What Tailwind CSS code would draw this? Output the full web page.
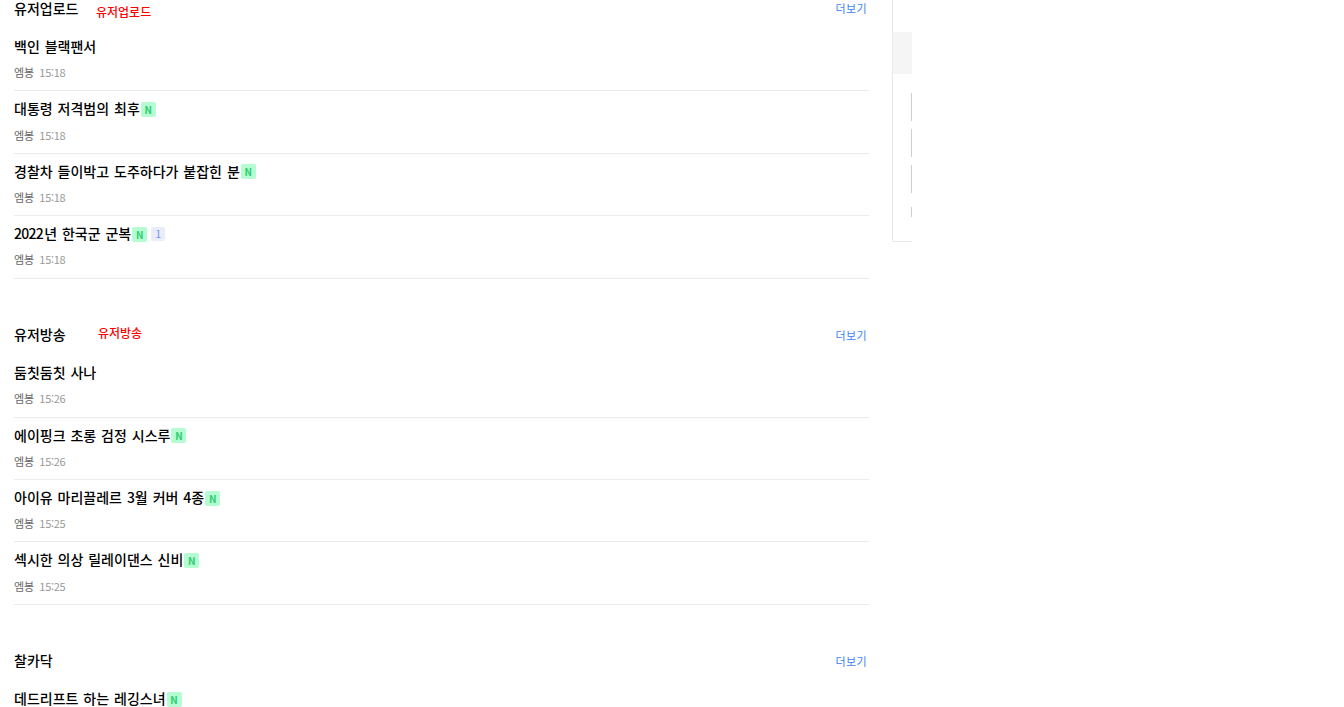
<!DOCTYPE html>
<html lang="ko"><head><meta charset="utf-8">
<script src="https://cdn.jsdelivr.net/npm/@tailwindcss/browser@4"></script></head>
<body class="bg-white overflow-hidden h-[707px] font-['Noto_Sans_CJK_KR','Noto_Sans',sans-serif]">
<div class="flex items-start h-[707px] overflow-hidden">
<main class="w-[855px] ml-[14px] shrink-0 flex flex-col gap-[43.2px] -mt-[4.4px]">

<section>
  <header class="flex h-[33.4px] items-start justify-between pr-[2px]">
    <div class="flex items-start"><h2 class="w-[82px] text-[14px] leading-[25px] font-medium text-black">유저업로드</h2><span class="text-[12px] leading-[16px] mt-[8.4px] font-medium text-[#ff0000]">유저업로드</span></div>
    <a class="text-[11px] leading-[25px] tracking-[0.4px] text-[#3b82f6]">더보기</a>
  </header>
  <ul>
    <li class="h-[62.4px] border-b border-[#e8ecec] flex flex-col pt-[4.6px]"><p class="h-[26px] flex items-center gap-px text-[14px] font-medium text-black [word-spacing:1px]">백인 블랙팬서</p><p class="mt-[4.7px] text-[11px] leading-[16px] text-[#666]">엠봉 <span class="ml-[2px] tracking-[-0.3px] text-[#999]">15:18</span></p></li>
    <li class="h-[62.4px] border-b border-[#e8ecec] flex flex-col pt-[4.6px]"><p class="h-[26px] flex items-center gap-px text-[14px] font-medium text-black [word-spacing:1px]">대통령 저격범의 최후<b class="mt-px w-[15px] h-[15px] rounded-[2px] bg-[#b5fcd3] text-[#2ecc71] text-[10px] leading-[15px] text-center font-bold">N</b></p><p class="mt-[4.7px] text-[11px] leading-[16px] text-[#666]">엠봉 <span class="ml-[2px] tracking-[-0.3px] text-[#999]">15:18</span></p></li>
    <li class="h-[62.4px] border-b border-[#e8ecec] flex flex-col pt-[4.6px]"><p class="h-[26px] flex items-center gap-px text-[14px] font-medium text-black [word-spacing:1px]">경찰차 들이박고 도주하다가 붙잡힌 분<b class="mt-px w-[15px] h-[15px] rounded-[2px] bg-[#b5fcd3] text-[#2ecc71] text-[10px] leading-[15px] text-center font-bold">N</b></p><p class="mt-[4.7px] text-[11px] leading-[16px] text-[#666]">엠봉 <span class="ml-[2px] tracking-[-0.3px] text-[#999]">15:18</span></p></li>
    <li class="h-[62.4px] border-b border-[#e8ecec] flex flex-col pt-[4.6px]"><p class="h-[26px] flex items-center gap-px text-[14px] font-medium text-black [word-spacing:1px]"><span class="whitespace-pre tracking-[-0.7px]">2022</span><span class="whitespace-pre">년 한국군 군복</span><b class="mt-px w-[15px] h-[15px] rounded-[2px] bg-[#b5fcd3] text-[#2ecc71] text-[10px] leading-[15px] text-center font-bold">N</b><b class="mt-px ml-[3px] w-[14px] h-[14px] rounded-[2px] bg-[#e8edf8] text-[#6f8cf5] text-[10px] leading-[14px] text-center font-normal">1</b></p><p class="mt-[4.7px] text-[11px] leading-[16px] text-[#666]">엠봉 <span class="ml-[2px] tracking-[-0.3px] text-[#999]">15:18</span></p></li>
  </ul>
</section>

<section>
  <header class="flex h-[33.4px] items-start justify-between pr-[2px]">
    <div class="flex items-start"><h2 class="w-[84px] text-[14px] leading-[25px] font-medium text-black">유저방송</h2><span class="text-[12px] leading-[16px] mt-[3.4px] font-medium text-[#ff0000]">유저방송</span></div>
    <a class="text-[11px] leading-[26px] tracking-[0.4px] text-[#3b82f6]">더보기</a>
  </header>
  <ul>
    <li class="h-[62.4px] border-b border-[#e8ecec] flex flex-col pt-[4.6px]"><p class="h-[26px] flex items-center gap-px text-[14px] font-medium text-black [word-spacing:1px]">둠칫둠칫 사나</p><p class="mt-[4.7px] text-[11px] leading-[16px] text-[#666]">엠봉 <span class="ml-[2px] tracking-[-0.3px] text-[#999]">15:26</span></p></li>
    <li class="h-[62.4px] border-b border-[#e8ecec] flex flex-col pt-[4.6px]"><p class="h-[26px] flex items-center gap-px text-[14px] font-medium text-black [word-spacing:1px]">에이핑크 초롱 검정 시스루<b class="mt-px w-[15px] h-[15px] rounded-[2px] bg-[#b5fcd3] text-[#2ecc71] text-[10px] leading-[15px] text-center font-bold">N</b></p><p class="mt-[4.7px] text-[11px] leading-[16px] text-[#666]">엠봉 <span class="ml-[2px] tracking-[-0.3px] text-[#999]">15:26</span></p></li>
    <li class="h-[62.4px] border-b border-[#e8ecec] flex flex-col pt-[4.6px]"><p class="h-[26px] flex items-center gap-px text-[14px] font-medium text-black [word-spacing:1px]">아이유 마리끌레르 3월 커버 4종<b class="mt-px w-[15px] h-[15px] rounded-[2px] bg-[#b5fcd3] text-[#2ecc71] text-[10px] leading-[15px] text-center font-bold">N</b></p><p class="mt-[4.7px] text-[11px] leading-[16px] text-[#666]">엠봉 <span class="ml-[2px] tracking-[-0.3px] text-[#999]">15:25</span></p></li>
    <li class="h-[62.4px] border-b border-[#e8ecec] flex flex-col pt-[4.6px]"><p class="h-[26px] flex items-center gap-px text-[14px] font-medium text-black [word-spacing:1px]">섹시한 의상 릴레이댄스 신비<b class="mt-px w-[15px] h-[15px] rounded-[2px] bg-[#b5fcd3] text-[#2ecc71] text-[10px] leading-[15px] text-center font-bold">N</b></p><p class="mt-[4.7px] text-[11px] leading-[16px] text-[#666]">엠봉 <span class="ml-[2px] tracking-[-0.3px] text-[#999]">15:25</span></p></li>
  </ul>
</section>

<section>
  <header class="flex h-[33.4px] items-start justify-between pr-[2px]">
    <h2 class="text-[14px] leading-[25px] font-medium text-black">찰카닥</h2>
    <a class="text-[11px] leading-[26px] tracking-[0.4px] text-[#3b82f6]">더보기</a>
  </header>
  <ul>
    <li class="h-[62.4px] flex flex-col pt-[4.6px]"><p class="h-[26px] flex items-center gap-px text-[14px] font-medium text-black [word-spacing:1px]">데드리프트 하는 레깅스녀<b class="mt-px w-[15px] h-[15px] rounded-[2px] bg-[#b5fcd3] text-[#2ecc71] text-[10px] leading-[15px] text-center font-bold">N</b></p></li>
  </ul>
</section>
</main>

<aside class="ml-[23px] w-[20px] h-[242px] shrink-0 border-l border-b border-[#e4e9ec] rounded-bl-[2px] flex flex-col">
  <div class="mt-[32px] h-[42px] bg-[#f5f5f5]"></div>
  <div class="mt-[19px] flex flex-col items-end gap-[8px]">
    <i class="block w-px h-[28px] bg-[#cfcfd3]"></i>
    <i class="block w-px h-[28px] bg-[#cfcfd3]"></i>
    <i class="block w-px h-[28px] bg-[#cfcfd3]"></i>
    <i class="block w-px h-[10px] mt-[6px] bg-[#cfcfd3]"></i>
  </div>
</aside>
</div>
</body></html>
